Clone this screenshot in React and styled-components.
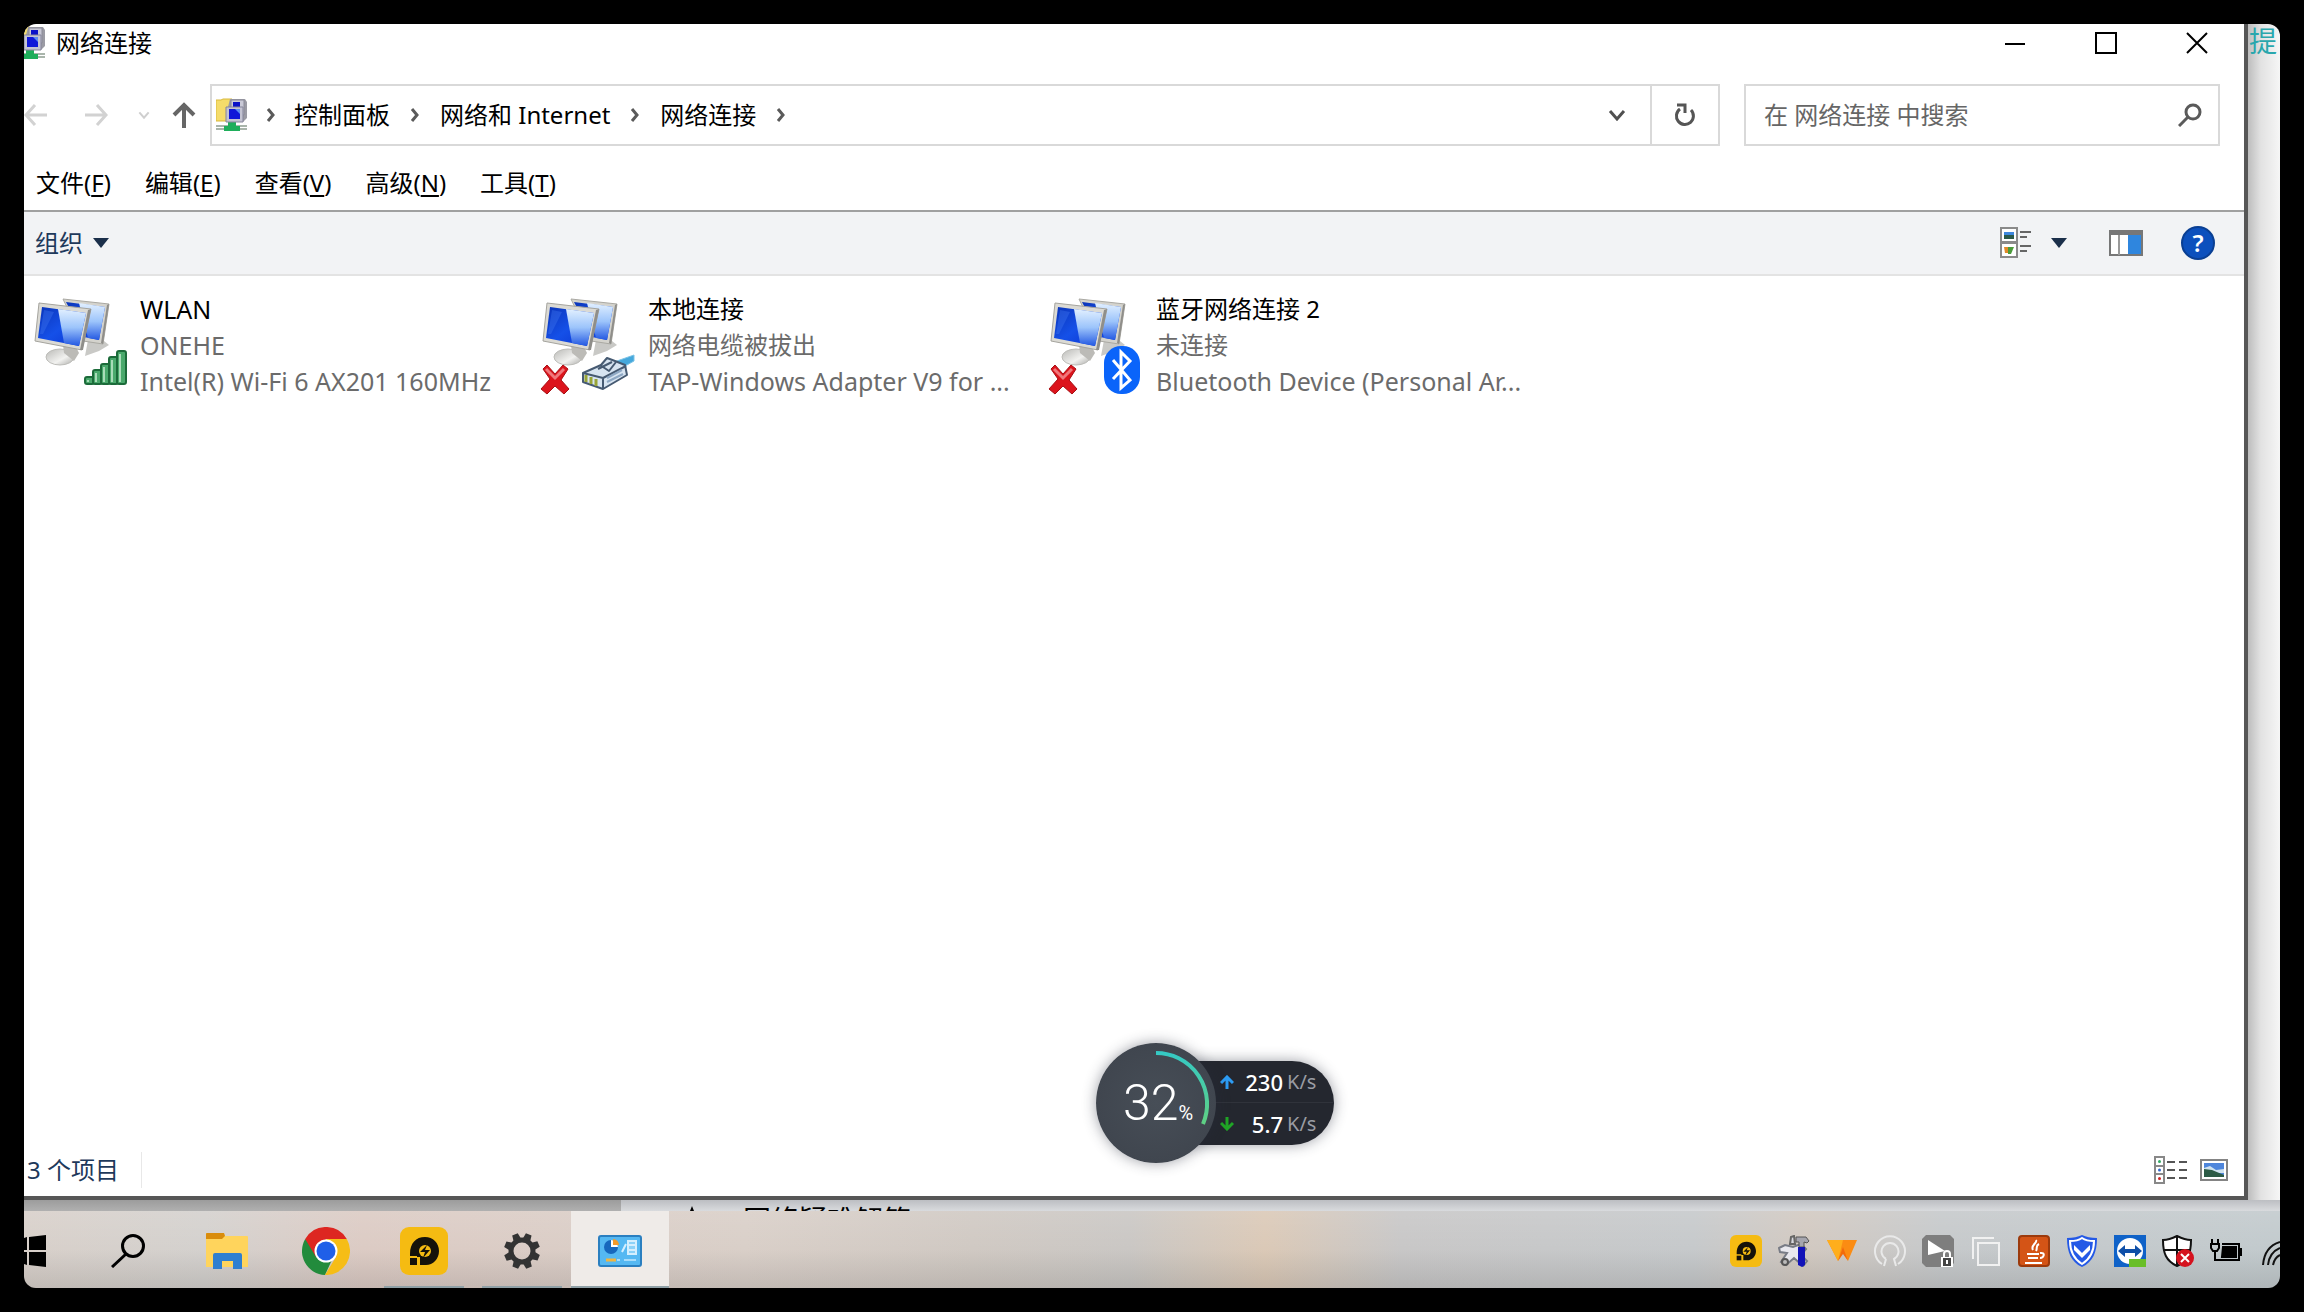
import React from "react";
import styled, { createGlobalStyle } from "styled-components";

const connections = [
  { name: "WLAN", status: "ONEHE", device: "Intel(R) Wi-Fi 6 AX201 160MHz", badge: "signal", latin: true },
  { name: "本地连接", status: "网络电缆被拔出", device: "TAP-Windows Adapter V9 for ...", badge: "cable" },
  { name: "蓝牙网络连接 2", status: "未连接", device: "Bluetooth Device (Personal Ar...", badge: "bluetooth" },
];

const menus = [
  ["文件", "F"],
  ["编辑", "E"],
  ["查看", "V"],
  ["高级", "N"],
  ["工具", "T"],
];

const crumbs = ["控制面板", "网络和 Internet", "网络连接"];

/*************Icons************************/

const Chevron = ({ color = "#5a5a5a" }) => (
  <svg width="10" height="16" viewBox="0 0 10 16" fill="none" stroke={color} strokeWidth="3">
    <path d="M2 2l5 6-5 6" />
  </svg>
);

const ChevronDown = ({ size = 18, color = "#505050", weight = 3 }) => (
  <svg width={size} height={size} viewBox="0 0 18 18" fill="none" stroke={color} strokeWidth={weight}>
    <path d="M2 5l7 8 7-8" />
  </svg>
);

const Triangle = () => (
  <svg width="16" height="10" viewBox="0 0 16 10">
    <path d="M0 0h16L8 10z" fill="#1b2f4a" />
  </svg>
);

const ArrowSide = ({ flip }) => (
  <svg width="24" height="24" viewBox="0 0 24 24" fill="none" stroke="#d2d2d2" strokeWidth="3">
    <path d={flip ? "M1 12h21M13 2l9 10-9 10" : "M23 12H2M11 2L2 12l9 10"} />
  </svg>
);

const ArrowUp = () => (
  <svg width="24" height="26" viewBox="0 0 24 26" fill="none" stroke="#666" strokeWidth="4">
    <path d="M12 26V3M2 13L12 3l10 10" />
  </svg>
);

const FolderNetIcon = () => (
  <svg width="32" height="34" viewBox="0 0 32 34">
    <path d="M0 2h5l2-1h9v22H0z" fill="#f5dc6a" stroke="#d9b93c" />
    <path d="M0 28h31M0 31h31" stroke="#a9b5ab" strokeWidth="2" />
    <path d="M12 23h8v5h4v5H8v-5h4z" fill="#1fae5b" />
    <path d="M14 1h15l2 3v16l-4 4V9H12z" fill="#9b9ba4" />
    <path d="M15 2h13v15H15z" fill="#c9c9d6" stroke="#8a8a98" />
    <path d="M17 4h7v6h-7z" fill="#0a12c8" />
    <path d="M10 9h17v15H10z" fill="#c4c4d2" stroke="#85859a" />
    <path d="M13 11h11v10H13z" fill="#1018d8" />
    <path d="M19 11h5v5z" fill="#5d8df0" />
  </svg>
);

const Monitors = () => (
  <>
    <defs>
      <linearGradient id="scr" x1="0" y1="0" x2="1" y2="1">
        <stop offset="0" stopColor="#0a34b8" />
        <stop offset=".5" stopColor="#1550e8" />
        <stop offset="1" stopColor="#0a34d0" />
      </linearGradient>
      <linearGradient id="shine" x1="0" y1="0" x2="0" y2="1">
        <stop offset="0" stopColor="#e2f0ff" />
        <stop offset=".5" stopColor="#9cc4fb" />
        <stop offset="1" stopColor="#2358e2" />
      </linearGradient>
      <linearGradient id="stand" x1="0" y1="0" x2="1" y2="1">
        <stop offset="0" stopColor="#b9b9b6" />
        <stop offset=".6" stopColor="#f2f2f0" />
        <stop offset="1" stopColor="#a9a9a6" />
      </linearGradient>
    </defs>
    <path d="M58 50l16 1 5 4-10 6-14 5z" fill="#c9c9c6" />
    <path d="M33 9l46 5-6 40-20-3z" fill="#d4d3cd" stroke="#aaa9a3" />
    <path d="M79 14l-2 1-6 38 2 1z" fill="#8f8e8a" />
    <path d="M36 12l39 5-6 33-15-3z" fill="url(#scr)" />
    <path d="M49 13l26 4-6 33-11-2z" fill="url(#shine)" />
    <ellipse cx="30" cy="67" rx="14" ry="8" fill="url(#stand)" stroke="#bdbdb9" />
    <path d="M33 55l13 2 3 6-5 8-10-8z" fill="#bcbbb7" />
    <path d="M9 13l52 6-9 41-47-9z" fill="#dbdad4" stroke="#a5a49e" />
    <path d="M61 19l-3 1-8 40 3 0z" fill="#8f8e8a" />
    <path d="M12 17l44 6-7 33-41-8z" fill="url(#scr)" />
    <path d="M28 19l28 4-7 33-15-3z" fill="url(#shine)" />
    <path d="M14 20l10 2-11 22-3 0z" fill="#3f76f0" opacity=".4" />
  </>
);

const RedCross = () => (
  <>
    <path
      d="M5 79l4-4 8 9 8-9 5 4-7 11 8 9-5 5-9-8-8 8-6-5 9-10z"
      fill="#dc141c"
      stroke="#a80f14"
      strokeWidth="1"
      strokeLinejoin="round"
    />
    <path d="M8 79l9 9 9-9" fill="none" stroke="#f0777b" strokeWidth="3" />
  </>
);

const ConnectionIcon = ({ badge }) => (
  <svg width="100" height="110" viewBox="0 0 100 110">
    <Monitors />
    {badge !== "signal" && <RedCross />}
    {badge === "signal" &&
      [7, 14, 20, 27, 33].map((h, i) => (
        <g key={h}>
          <rect x={55 + i * 8} y={94 - h} width="9" height={h} rx="2" fill="#4aa96c" stroke="#1c6b3a" strokeWidth="2" />
          <path d={`M${58 + i * 8} ${97 - h}v${h - 5}`} stroke="#a9dcb8" strokeWidth="2" />
        </g>
      ))}
    {badge === "cable" && (
      <g stroke="#465a72" strokeLinejoin="round">
        <path d="M76 72l20-7v6l-16 9z" fill="#45a8dc" stroke="#7cc3e6" />
        <path d="M45 83l18-8 6-7 8 3 10 4 2 10-24 14-20-7z" fill="#d7e4f1" strokeWidth="2" />
        <path d="M45 83l20 5 23-12M65 88v10M62 75l9 6 7-9M60 79l14-7" fill="none" strokeWidth="2" />
        <path d="M48 85v7M53 87v7M58 89v7" stroke="#98a437" strokeWidth="3" />
        <path d="M69 88l15-8M69 92l16-8" stroke="#8ea8c4" strokeWidth="2" />
      </g>
    )}
    {badge === "bluetooth" && (
      <g>
        <rect x="58" y="56" width="36" height="48" rx="17" fill="#0a64fa" />
        <path d="M67 70l17 20-9 8V62l9 9-17 18" fill="none" stroke="#fff" strokeWidth="3" />
      </g>
    )}
  </svg>
);

const ViewIcon = () => (
  <svg width="32" height="32" viewBox="0 0 32 32">
    <path d="M1 1h16v14H1zM1 16h16v14H1z" fill="#fff" stroke="#8a8a8a" strokeWidth="2" />
    <path d="M4 5h10v4H4z" fill="#3d87dd" />
    <path d="M4 8h10v4H4z" fill="#2b5a4a" />
    <path d="M4 20h5l1 6H5z" fill="#e08a2a" />
    <path d="M8 20h6l-3 7H8z" fill="#4b9b3a" />
    <path d="M20 5h11M20 10h7M20 19h11M20 24h7" stroke="#666" strokeWidth="2" />
  </svg>
);

const PaneIcon = () => (
  <svg width="34" height="26" viewBox="0 0 34 26">
    <path d="M1 1h32v24H1z" fill="#fff" stroke="#777" strokeWidth="2" />
    <path d="M1 1h32v4H1z" fill="#777" />
    <path d="M19 5h13v19H19z" fill="#2f86de" />
    <path d="M10 5v20" stroke="#999" strokeWidth="2" />
  </svg>
);

const DetailsIcon = () => (
  <svg width="34" height="28" viewBox="0 0 34 28">
    <path d="M1 1h9v26H1zM1 10h9M1 18h9" fill="#fff" stroke="#888" strokeWidth="2" />
    <circle cx="5.5" cy="5.5" r="1.5" fill="#3a6" />
    <circle cx="5.5" cy="14" r="1.5" fill="#36c" />
    <circle cx="5.5" cy="22.5" r="1.5" fill="#c22" />
    <path d="M13 6h8M25 6h8M13 14h8M25 14h8M13 22h8M25 22h8" stroke="#555" strokeWidth="2" />
  </svg>
);

const PictureIcon = () => (
  <svg width="28" height="22" viewBox="0 0 28 22">
    <path d="M1 1h26v20H1z" fill="#fff" stroke="#848484" strokeWidth="2" />
    <path d="M4 4h20v14H4z" fill="#4e86dc" />
    <path d="M4 9l6-2 6 4 8-1v4H4z" fill="#cfe2ef" />
    <path d="M4 10l8 1 12 5v2H4z" fill="#2c5b46" />
  </svg>
);

const WindowsLogo = () => (
  <svg width="22" height="32" viewBox="0 0 22 32">
    <path d="M0 3l3-1v13H0zM5 2l17-2v15H5zM0 17h3v13l-3-1zM5 17h17v15L5 30z" />
  </svg>
);

const SearchLarge = () => (
  <svg width="34" height="34" viewBox="0 0 34 34" fill="none" stroke="#000" strokeWidth="3">
    <circle cx="22" cy="12" r="10.5" />
    <path d="M15 20L1 33" />
  </svg>
);

const FolderIcon = () => (
  <svg width="44" height="36" viewBox="0 0 44 36">
    <path d="M1 0h18l1 3h22a1 1 0 0 1 1 1v30H1z" fill="#ffd45c" />
    <path d="M1 1a1 1 0 0 1 1-1h17l1 3-3 3H1z" fill="#d98c0c" />
    <path d="M8 36V22a2 2 0 0 1 2-2h25a2 2 0 0 1 2 2v14h-9v-8H17v8z" fill="#2f7fd0" />
  </svg>
);

const ChromeIcon = () => (
  <svg width="48" height="48" viewBox="0 0 48 48">
    <path d="M24 24h10L23 48A24 24 0 0 1 3.200 12z" fill="#228b3c" />
    <path d="M3.200 12A24 24 0 0 1 44.800 12H24L14 30z" fill="#dd2621" />
    <path d="M34 30L23 48A24 24 0 0 0 44.800 12H24z" fill="#f6bd16" />
    <circle cx="24" cy="24" r="11.500" fill="#fff" />
    <circle cx="24" cy="24" r="9.500" fill="#1f5fe8" />
  </svg>
);

const PlayerIcon = ({ size }) => (
  <svg width={size} height={size} viewBox="0 0 48 48">
    <rect width="48" height="48" rx="9" fill="#f5bb12" />
    <path d="M10 27c0-11 6-17 15-17 8 0 14 6 14 14s-6 14-13 14h-6v-8h-3v-1h-7z" fill="#15120a" />
    <path d="M10 31h7v7h-7z" fill="#15120a" />
    <circle cx="25" cy="24" r="6" fill="#f5bb12" />
    <path d="M27 18l-7 7h5l-2 6 7-8h-5z" fill="#15120a" />
  </svg>
);

const GearIcon = () => (
  <svg width="38" height="38" viewBox="0 0 38 38">
    <circle cx="19" cy="19" r="11" fill="none" stroke="#333" strokeWidth="5" />
    {[22, 67, 112, 157, 202, 247, 292, 337].map(a => (
      <path key={a} d="M15 7l1-6h6l1 6z" fill="#333" transform={`rotate(${a} 19 19)`} />
    ))}
  </svg>
);

const ControlPanelIcon = () => (
  <svg width="44" height="32" viewBox="0 0 44 32">
    <rect x="1" y="1" width="42" height="30" rx="2" fill="#55b8f2" stroke="#2a7fc0" strokeWidth="2" />
    <circle cx="13" cy="12" r="7" fill="#1767bd" />
    <path d="M13 12V5a7 7 0 0 1 7 7z" fill="#fff" />
    <path d="M15 10V4a6 6 0 0 1 6 6z" fill="#f39a2b" />
    <path d="M30 6h8v13h-8zM30 10h8M30 15h8M24 17l4-8" fill="#8cd2f8" stroke="#d5effe" strokeWidth="2" />
    <path d="M8 25h10" stroke="#f0b541" strokeWidth="3" />
    <path d="M19 25h3M26 25h12" stroke="#a8dcfa" strokeWidth="2" />
  </svg>
);

const trayIcons = [
  ["LDPlayer", <PlayerIcon size={32} />],
  [
    "工具箱",
    <svg width="32" height="32" viewBox="0 0 32 32">
      <path d="M1 13l6-3 8 2 8-3 5 5-5 6 6 6-4 5-9-8-8 7-5-3 6-9-7-1z" fill="#e8e8ee" stroke="#777b85" strokeWidth="2" />
      <path d="M12 9l1-7 3-1 1 8z" fill="#d8d8de" stroke="#666" strokeWidth="2" />
      <path d="M18 2h10l3 4-2 2-3-1v5h-5V7h-3z" fill="#a5a5ae" stroke="#555" />
      <path d="M20 12h7v18l-3 2-4-2z" fill="#1212b8" />
      <circle cx="7" cy="27" r="3" fill="#bbb" stroke="#555" strokeWidth="2" />
    </svg>,
  ],
  [
    "WPS",
    <svg width="32" height="32" viewBox="0 0 32 32">
      <path d="M1 5h30l-9 21-5-9-5 9z" fill="#fb8c13" />
      <path d="M1 5h16l-5 21z" fill="#ffae1c" />
      <path d="M12 26l5-14 5 14-5-7z" fill="#f26a0c" />
    </svg>,
  ],
  [
    "OpenVPN",
    <svg width="32" height="32" viewBox="0 0 32 32" fill="none" stroke="#e9e9e9" strokeWidth="2">
      <path d="M8 29a15 15 0 1 1 16 0M12 24a8.500 8.500 0 1 1 8 0l2 7M12 24l-2 7" />
    </svg>,
  ],
  [
    "播放",
    <svg width="32" height="32" viewBox="0 0 32 32">
      <path d="M4 0h24l4 4v24l-4 4H4l-4-4V4z" fill="#7e7e7e" />
      <path d="M6 5l17 11L6 20z" fill="#fff" />
      <path d="M19 22h12v10H19z" fill="#fff" />
      <path d="M22 22v-3a3 3 0 0 1 6 0v3" fill="none" stroke="#fff" strokeWidth="2" />
      <path d="M21 23h8v8h-8z" fill="#444" />
      <path d="M25 25v4" stroke="#fff" strokeWidth="2" />
    </svg>,
  ],
  [
    "虚拟机",
    <svg width="32" height="32" viewBox="0 0 32 32" fill="none" stroke="#f1f1f1" strokeWidth="2">
      <path d="M8 8h21v22H8zM3 24V3h21" />
    </svg>,
  ],
  [
    "Java",
    <svg width="32" height="32" viewBox="0 0 32 32">
      <rect x="1" y="1" width="30" height="30" rx="3" fill="#d45416" stroke="#9c3a0c" strokeWidth="2" />
      <path
        d="M18 5c2 3-6 5-3 10M21 9c-4 2-1 4-3 7M9 19h12M10 23h10M7 28h17M22 18c6-1 4 5 0 5"
        fill="none"
        stroke="#fff"
        strokeWidth="2"
      />
    </svg>,
  ],
  [
    "安全卫士",
    <svg width="32" height="32" viewBox="0 0 32 32">
      <path d="M1 3c6 0 11-1 15-3 4 2 9 3 15 3 0 14-4 24-15 29C5 27 1 17 1 3z" fill="#2459e6" />
      <path d="M4 6c5 0 9-1 12-3 3 2 7 3 12 3 0 11-4 18-12 23C8 24 4 17 4 6z" fill="none" stroke="#fff" strokeWidth="2" />
      <path d="M8 10l8 8 8-8v5l-8 8-8-8z" fill="#fff" />
    </svg>,
  ],
  [
    "TeamViewer",
    <svg width="32" height="32" viewBox="0 0 32 32">
      <path d="M0 0h32v32H0z" fill="#0f62c8" />
      <circle cx="16" cy="16" r="13" fill="#fff" />
      <path d="M4 16l7-6v4h10v-4l7 6-7 6v-4H11v4z" fill="#0f4fa8" />
      <path d="M15 24h17v8H15z" fill="#69be28" />
    </svg>,
  ],
  [
    "Windows 安全中心",
    <svg width="32" height="32" viewBox="0 0 32 32">
      <path d="M1 5c6 0 10-2 14-4 4 2 8 4 14 4 0 13-3 21-14 26C4 26 1 18 1 5z" fill="#fff" stroke="#111" strokeWidth="2" />
      <path d="M15 1v30M1 15h28" stroke="#111" strokeWidth="2" />
      <circle cx="23" cy="23" r="9" fill="#d5121e" />
      <path d="M19 19l8 8M27 19l-8 8" stroke="#fff" strokeWidth="2" />
    </svg>,
  ],
  [
    "电源",
    <svg width="32" height="32" viewBox="0 0 32 32" fill="none" stroke="#000" strokeWidth="2">
      <path d="M2 4v4M8 4v4M1 9h8v4l-2 3H3l-2-3zM5 16v9h4" />
      <path d="M12 9h17v16H9M31 13v8" />
      <path d="M13 12h13v10H12z" fill="#000" />
    </svg>,
  ],
  [
    "无线网络",
    <svg width="22" height="32" viewBox="0 0 22 32" fill="none" stroke="#111" strokeWidth="2">
      <path d="M5 30C6 18 12 10 22 7M10 30c1-9 5-14 12-17M15 30c1-5 3-8 7-10" />
    </svg>,
  ],
];

/*************Page************************/

const Explorer = () => (
  <Window>
    <TitleBar>
      <TitleIcon>
        <FolderNetIcon />
      </TitleIcon>
      <Title>网络连接</Title>
      <CaptionButton aria-label="最小化">
        <svg width="22" height="22" viewBox="0 0 22 22" stroke="#000" strokeWidth="2">
          <path d="M1 12h20" />
        </svg>
      </CaptionButton>
      <CaptionButton aria-label="最大化">
        <svg width="22" height="22" viewBox="0 0 22 22" fill="none" stroke="#000" strokeWidth="2">
          <path d="M1 1h20v20H1z" />
        </svg>
      </CaptionButton>
      <CaptionButton aria-label="关闭">
        <svg width="22" height="22" viewBox="0 0 22 22" stroke="#000" strokeWidth="2">
          <path d="M1 1l20 20M21 1L1 21" />
        </svg>
      </CaptionButton>
    </TitleBar>

    <NavRow>
      <NavButtons>
        <NavButton aria-label="后退"><ArrowSide /></NavButton>
        <NavButton aria-label="前进"><ArrowSide flip /></NavButton>
        <NavButton aria-label="最近"><ChevronDown size={12} color="#cfcfcf" /></NavButton>
        <NavButton aria-label="向上"><ArrowUp /></NavButton>
      </NavButtons>
      <Address>
        <FolderNetIcon />
        <Separator $first><Chevron /></Separator>
        {crumbs.map(c => (
          <React.Fragment key={c}>
            <Crumb href="#">{c}</Crumb>
            <Separator><Chevron /></Separator>
          </React.Fragment>
        ))}
        <HistoryButton aria-label="历史"><ChevronDown /></HistoryButton>
        <RefreshButton aria-label="刷新">
          <svg width="22" height="24" viewBox="0 0 22 24" fill="none" stroke="#555" strokeWidth="3">
            <path d="M17 7a8.500 8.500 0 1 1-11-1" />
            <path d="M3 2h8v8" />
          </svg>
        </RefreshButton>
      </Address>
      <SearchBox>
        <SearchInput aria-label="搜索" placeholder="在 网络连接 中搜索" />
        <svg width="24" height="24" viewBox="0 0 24 24" fill="none" stroke="#5a5a5a" strokeWidth="3">
          <circle cx="15" cy="9" r="7" />
          <path d="M10 14L1 23" />
        </svg>
      </SearchBox>
    </NavRow>

    <MenuBar>
      {menus.map(([label, key]) => (
        <MenuButton key={key}>
          {label}(<u>{key}</u>)
        </MenuButton>
      ))}
    </MenuBar>

    <Toolbar>
      <OrganizeButton>
        组织
        <Triangle />
      </OrganizeButton>
      <ToolGroup>
        <ToolButton aria-label="更改视图"><ViewIcon /></ToolButton>
        <ToolButton aria-label="更多选项"><Triangle /></ToolButton>
        <ToolButton $wide aria-label="预览窗格"><PaneIcon /></ToolButton>
        <HelpButton aria-label="帮助">?</HelpButton>
      </ToolGroup>
    </Toolbar>

    <Connections>
      {connections.map(c => (
        <Connection key={c.name}>
          <ConnectionIcon badge={c.badge} />
          <ConnectionText>
            <Line $dark $latin={c.latin}>{c.name}</Line>
            <Line $latin={c.latin}>{c.status}</Line>
            <Line $latin>{c.device}</Line>
          </ConnectionText>
        </Connection>
      ))}
    </Connections>

    <StatusBar>
      <ItemCount>3 个项目</ItemCount>
      <ToolGroup>
        <StatusButton aria-label="详细信息"><DetailsIcon /></StatusButton>
        <StatusButton aria-label="大图标"><PictureIcon /></StatusButton>
      </ToolGroup>
    </StatusBar>
  </Window>
);

const SpeedWidget = () => (
  <Widget>
    <Dial>
      <svg width="120" height="120" viewBox="0 0 120 120" fill="none">
        <defs>
          <linearGradient id="arc" x1="0" y1="0" x2="0" y2="1">
            <stop offset="0" stopColor="#35c9c4" />
            <stop offset="1" stopColor="#5fd083" />
          </linearGradient>
        </defs>
        <path d="M60 10A51 51 0 0 1 107 81" stroke="url(#arc)" strokeWidth="4" />
      </svg>
      <DialValue>
        32<small>%</small>
      </DialValue>
    </Dial>
    <Speeds>
      <Speed>
        <svg width="14" height="14" viewBox="0 0 14 14" fill="none" stroke="#2d9cf4" strokeWidth="3">
          <path d="M7 14V3M1 8l6-6 6 6" />
        </svg>
        <b>230</b>
        <span>K/s</span>
      </Speed>
      <Speed>
        <svg width="14" height="14" viewBox="0 0 14 14" fill="none" stroke="#20a526" strokeWidth="3">
          <path d="M7 0v11M1 6l6 6 6-6" />
        </svg>
        <b>5.7</b>
        <span>K/s</span>
      </Speed>
    </Speeds>
  </Widget>
);

const Taskbar = () => (
  <Bar>
    <TaskButton $w={54} $start aria-label="开始"><WindowsLogo /></TaskButton>
    <TaskButton $w={99} aria-label="搜索"><SearchLarge /></TaskButton>
    <TaskButton $w={100} aria-label="文件资源管理器"><FolderIcon /></TaskButton>
    <TaskButton aria-label="Chrome"><ChromeIcon /></TaskButton>
    <TaskButton $running aria-label="LDPlayer"><PlayerIcon size={48} /></TaskButton>
    <TaskButton $running aria-label="设置"><GearIcon /></TaskButton>
    <TaskButton $active aria-label="控制面板"><ControlPanelIcon /></TaskButton>
    <Tray>
      {trayIcons.map(([name, icon]) => (
        <TrayButton key={name} aria-label={name}>{icon}</TrayButton>
      ))}
    </Tray>
  </Bar>
);

const App = () => (
  <Page>
    <GlobalStyle />
    <Screen>
      <Desktop>
        <Explorer />
        <BehindSide>提</BehindSide>
        <BehindBottom>
          <BehindPanel />
          <svg width="8" height="12" viewBox="0 0 8 12">
            <path d="M4 2l4 10H0z" />
          </svg>
          <span>网络疑难解答</span>
        </BehindBottom>
      </Desktop>
      <Taskbar />
      <SpeedWidget />
    </Screen>
  </Page>
);

export default App;

/*************Styles************************/
const GlobalStyle = createGlobalStyle`
  * { box-sizing: border-box; }
  body {
    margin: 0;
    background: #000;
    font-family: "Noto Sans", "Noto Sans CJK SC", sans-serif;
    font-size: 24px;
    line-height: 36px;
    color: #000;
  }
  button, input { font: inherit; color: inherit; }
  svg { display: block; flex: none; }
`;

const Page = styled.div`
  height: 100vh;
  padding: 24px;
  background: #000;
`;

const Screen = styled.div`
  position: relative;
  height: 100%;
  display: flex;
  flex-direction: column;
  border-radius: 12px;
  overflow: hidden;
`;

const Desktop = styled.div`
  flex: 1;
  min-height: 0;
  display: grid;
  grid-template-columns: 1fr 32px;
  grid-template-rows: 1fr 11px;
`;

const Window = styled.main`
  display: flex;
  flex-direction: column;
  min-width: 0;
  background: #fff;
  border: solid #565656;
  border-width: 0 4px 4px 0;
`;

const BehindSide = styled.div`
  padding-left: 1px;
  overflow: hidden;
  font-size: 28px;
  line-height: 34px;
  color: #2aa7ad;
  background: linear-gradient(90deg, #bdbdbd, #e2e2e2 40%, #f6f6f6);
`;

const BehindBottom = styled.div`
  grid-column: 1 / -1;
  display: flex;
  overflow: hidden;
  background: linear-gradient(#bcbec2, #d9dbde);
  svg { margin: 4px 47px 0 67px; }
  span {
    font-size: 28px;
    line-height: 40px;
  }
`;

const BehindPanel = styled.div`
  width: 597px;
  background: linear-gradient(#9c9c9c, #b0b0b0);
`;

const PlainButton = styled.button`
  display: flex;
  align-items: center;
  justify-content: center;
  padding: 0;
  border: 0;
  background: none;
`;

const TitleBar = styled.header`
  display: flex;
  height: 38px;
  padding-right: 2px;
`;

const TitleIcon = styled.div`
  margin-left: -10px;
  padding-top: 2px;
`;

const Title = styled.div`
  flex: 1;
  padding-left: 10px;
  line-height: 38px;
`;

const CaptionButton = styled(PlainButton)`
  width: 91px;
`;

const NavRow = styled.div`
  display: flex;
  height: 84px;
  padding: 22px 24px 0 0;
`;

const NavButtons = styled.div`
  display: grid;
  grid-template-columns: 60px 54px 34px 38px;
`;

const NavButton = styled(PlainButton)`
  justify-content: flex-start;
`;

const Address = styled.nav`
  flex: 1;
  display: flex;
  align-items: center;
  margin-right: 24px;
  padding-left: 4px;
  border: 2px solid #d9d9d9;
`;

const Separator = styled.span`
  display: flex;
  justify-content: center;
  width: ${p => (p.$first ? "46px" : "50px")};
`;

const Crumb = styled.a`
  color: #000;
  text-decoration: none;
`;

const HistoryButton = styled(PlainButton)`
  width: 66px;
  height: 100%;
  margin-left: auto;
`;

const RefreshButton = styled(PlainButton)`
  width: 68px;
  height: 100%;
  border-left: 2px solid #d9d9d9;
`;

const SearchBox = styled.div`
  display: flex;
  align-items: center;
  width: 476px;
  padding: 0 16px 0 18px;
  border: 2px solid #d9d9d9;
`;

const SearchInput = styled.input`
  flex: 1;
  min-width: 0;
  padding: 0;
  border: 0;
  outline: none;
  &::placeholder {
    color: #666;
    opacity: 1;
  }
`;

const MenuBar = styled.div`
  display: flex;
  gap: 34px;
  height: 66px;
  padding: 10px 12px 0;
  border-bottom: 2px solid #a0a0a0;
`;

const MenuButton = styled(PlainButton)`
  u {
    text-decoration-thickness: 2px;
    text-underline-offset: 3px;
  }
`;

const Toolbar = styled.div`
  display: flex;
  align-items: center;
  justify-content: space-between;
  height: 64px;
  padding: 0 29px 0 11px;
  background: #f2f3f5;
  border-bottom: 2px solid #e3e3e3;
`;

const OrganizeButton = styled(PlainButton)`
  gap: 10px;
  color: #1e395b;
`;

const ToolGroup = styled.div`
  display: flex;
  align-items: center;
`;

const ToolButton = styled(PlainButton)`
  padding: ${p => (p.$wide ? "0 38px 0 42px" : "0 0 0 19px")};
`;

const HelpButton = styled(PlainButton)`
  width: 34px;
  height: 34px;
  border: 2px solid #0a3f93;
  border-radius: 50%;
  background: #0c50bd;
  color: #fff;
  font-weight: 600;
`;

const Connections = styled.section`
  flex: 1;
  display: grid;
  grid-template-columns: repeat(auto-fill, 508px);
  align-content: start;
  padding: 14px 6px;
`;

const Connection = styled.article`
  display: flex;
  gap: 10px;
`;

const ConnectionText = styled.div`
  padding-top: 1px;
  white-space: nowrap;
`;

/* the CJK glyphs run wide, so the plain Latin lines get a step more */
const Line = styled.div`
  font-size: ${p => (p.$latin ? "25px" : "24px")};
  color: ${p => (p.$dark ? "#000" : "#6b6b6b")};
`;

const StatusBar = styled.footer`
  display: flex;
  align-items: center;
  justify-content: space-between;
  height: 48px;
  padding: 0 16px 4px 3px;
`;

const ItemCount = styled.div`
  padding-right: 22px;
  border-right: 1px solid #e8e8e8;
  color: #1e395b;
`;

const StatusButton = styled(PlainButton)`
  margin-left: 12px;
`;

const Bar = styled.footer`
  display: flex;
  height: 77px;
  background:
    linear-gradient(rgba(255, 255, 255, 0.1), rgba(255, 255, 255, 0) 50%, rgba(60, 60, 60, 0.14)),
    linear-gradient(90deg, #d8d0ca, #d4d1ce 8%, #dccbc4 15%, #d9cfc8 32%, #d0c9c3 42%, #cac7c4 49%, #dbc9b7 55%, #c8c7c7 61%, #c6c9cb 74%, #d2c9c1 79%, #c6c9cb 85%, #c2cacd);
`;

const TaskButton = styled(PlainButton)`
  position: relative;
  width: ${p => p.$w || 98}px;
  padding-top: 3px;
  justify-content: ${p => (p.$start ? "flex-start" : "center")};
  background: ${p => (p.$active ? "#efebe8" : "none")};
  &::after {
    content: "";
    display: ${p => (p.$running || p.$active ? "block" : "none")};
    position: absolute;
    left: ${p => (p.$active ? "0" : "9px")};
    right: ${p => (p.$active ? "0" : "9px")};
    bottom: 0;
    height: 2px;
    background: #8fa0a6;
  }
`;

const Tray = styled.div`
  display: flex;
  gap: 16px;
  margin-left: auto;
`;

const TrayButton = styled(PlainButton)`
  padding-top: 3px;
`;

/* floats over the window, its ring overlapping the pill */
const Widget = styled.aside`
  position: absolute;
  left: calc(50% - 56px);
  bottom: 125px;
  display: flex;
  align-items: center;
`;

const Dial = styled.div`
  position: relative;
  z-index: 1;
  width: 120px;
  height: 120px;
  border-radius: 50%;
  background: radial-gradient(circle, #474e57, #40464f 70%, #363b43);
  box-shadow: 0 0 14px rgba(40, 44, 60, 0.45);
`;

const DialValue = styled.div`
  position: absolute;
  inset: 0;
  display: flex;
  align-items: baseline;
  justify-content: center;
  padding-left: 4px;
  color: #fff;
  font-family: Roboto, sans-serif;
  font-size: 50px;
  font-weight: 300;
  line-height: 120px;
  small {
    font-size: 20px;
    font-weight: 400;
  }
`;

const Speeds = styled.div`
  width: 140px;
  height: 84px;
  margin-left: -22px;
  border-radius: 0 42px 42px 0;
  background: #24272f;
  box-shadow: 0 0 14px rgba(40, 44, 60, 0.45);
`;

const Speed = styled.div`
  display: grid;
  grid-template-columns: 14px 1fr 30px;
  gap: 4px;
  align-items: center;
  height: 42px;
  padding: 0 17px 0 26px;
  color: #fff;
  font-size: 22px;
  &:first-child { border-bottom: 1px solid #30333b; }
  b {
    font-weight: 500;
    text-align: right;
  }
  span {
    color: #9a9ca3;
    font-size: 20px;
  }
`;
